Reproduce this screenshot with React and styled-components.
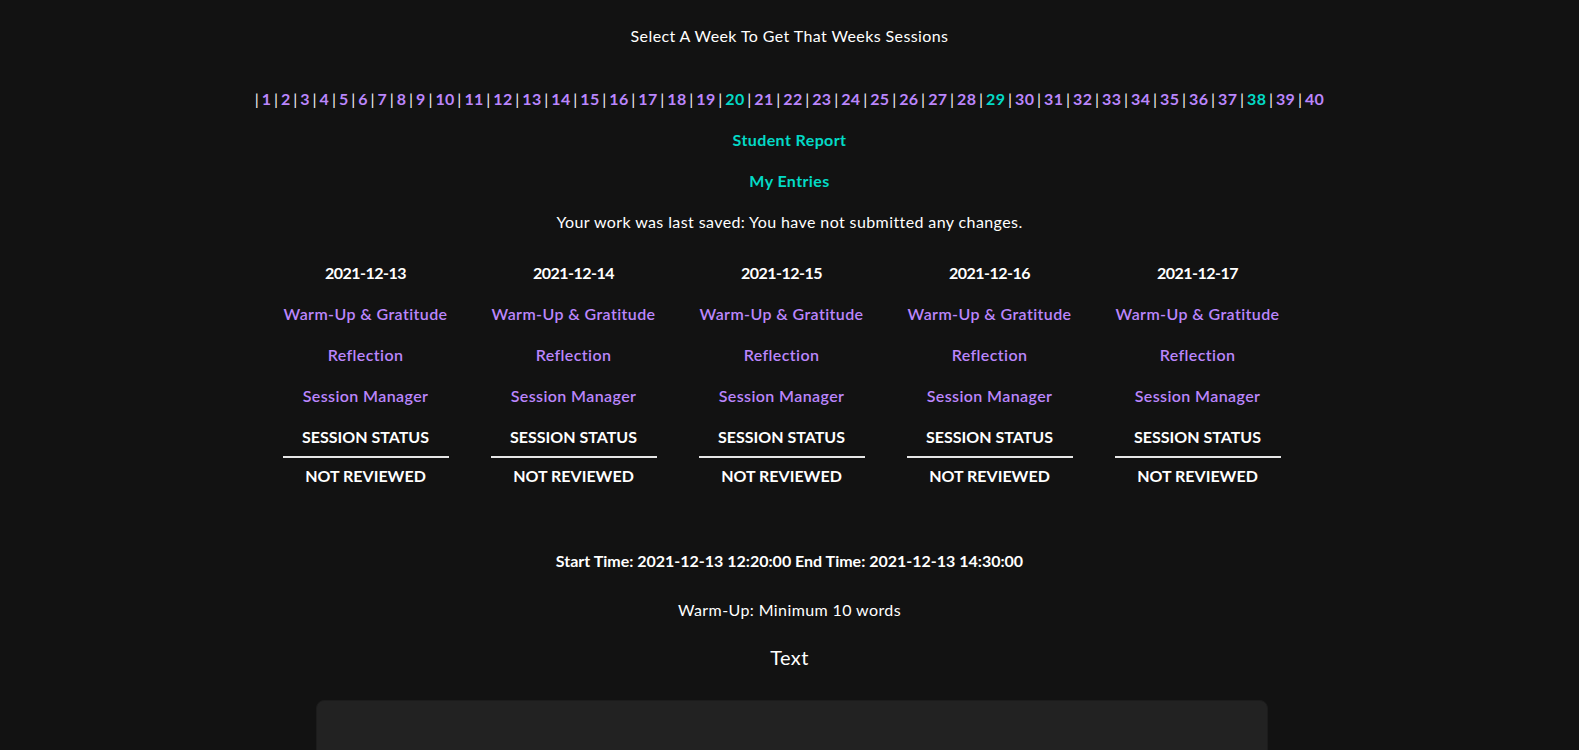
import React from 'react'
import styled, { createGlobalStyle } from 'styled-components'

const GlobalStyle = createGlobalStyle`
    body {
        margin: 0;
        background: #121212;
        color: #ffffff;
        font-family: 'Lato', 'Noto Sans', sans-serif;
        letter-spacing: 0.4px;
    }
`

const days = ['2021-12-13', '2021-12-14', '2021-12-15', '2021-12-16', '2021-12-17']
const weeks = Array.from({ length: 40 }, (_, i) => i + 1)
const activeWeeks = [20, 29, 38]

function App() {
    return (
        <Page>
            <GlobalStyle />
            <Title>Select A Week To Get That Weeks Sessions</Title>
            <WeekNav>
                {
                    weeks.map((week) => {
                        return (
                            <React.Fragment key={week}>
                                <Sep>|</Sep>
                                <WeekLink href='#' active={activeWeeks.includes(week)}>{week}</WeekLink>
                            </React.Fragment>
                        )
                    })
                }
            </WeekNav>
            <Line><TealLink href='#'>Student Report</TealLink></Line>
            <Line><TealLink href='#'>My Entries</TealLink></Line>
            <Line>Your work was last saved: You have not submitted any changes.</Line>

            <Days>
                {
                    days.map((day) => {
                        return (
                            <Day key={day}>
                                <DateLine>{day}</DateLine>
                                <Line><PurpleLink href='#'>Warm-Up &amp; Gratitude</PurpleLink></Line>
                                <Line><PurpleLink href='#'>Reflection</PurpleLink></Line>
                                <Line><PurpleLink href='#'>Session Manager</PurpleLink></Line>
                                <StatusLabel>SESSION STATUS</StatusLabel>
                                <StatusValue>NOT REVIEWED</StatusValue>
                            </Day>
                        )
                    })
                }
            </Days>

            <Times>Start Time: 2021-12-13 12:20:00 End Time: 2021-12-13 14:30:00</Times>
            <Line>Warm-Up: Minimum 10 words</Line>
            <FieldLabel>Text</FieldLabel>
            <TextBox />
        </Page>
    )
}

export default App

const Page = styled.div`
    display: flex;
    flex-direction: column;
    align-items: center;
    padding-top: 15px;
    min-height: 750px;
    box-sizing: border-box;
    overflow: hidden;
`

const Line = styled.div`
    height: 41px;
    display: flex;
    align-items: center;
    justify-content: center;
    font-size: 16px;
    font-weight: 400;
    color: #ffffff;
    white-space: nowrap;
`

const BoldLine = styled(Line)`
    font-weight: 700;
    letter-spacing: 0;
`

const DateLine = styled(BoldLine)`
    letter-spacing: -0.5px;
`

const Title = styled(Line)`
    margin-bottom: 22px;
`

const WeekNav = styled(Line)`
    font-weight: 700;
    gap: 2.6px;
`

const Sep = styled.span`
    color: #f2f2f2;
    font-weight: 400;
`

const WeekLink = styled.a`
    color: ${(props) => (props.active ? '#03dac6' : '#bb86fc')};
    text-decoration: none;
`

const TealLink = styled.a`
    color: #03dac6;
    font-weight: 700;
    text-decoration: none;
`

const PurpleLink = styled.a`
    color: #bb86fc;
    font-weight: 600;
    text-decoration: none;
`

const Days = styled.div`
    display: flex;
    gap: 42px;
    margin-top: 10px;
    padding-right: 16px;
`

const Day = styled.div`
    width: 166px;
    display: flex;
    flex-direction: column;
`

const StatusLabel = styled(BoldLine)`
    height: 40px;
    border-bottom: 2px solid #e6e6e6;
`

const StatusValue = styled(BoldLine)`
    height: 34px;
`

const Times = styled(BoldLine)`
    margin-top: 48px;
    margin-bottom: 8px;
`

const FieldLabel = styled(Line)`
    font-size: 20px;
    margin-top: 6px;
`

const TextBox = styled.div`
    width: 950px;
    height: 160px;
    margin-top: 23px;
    margin-left: 5px;
    background: #222222;
    border: 1px solid #1c1c1c;
    border-radius: 8px;
`
